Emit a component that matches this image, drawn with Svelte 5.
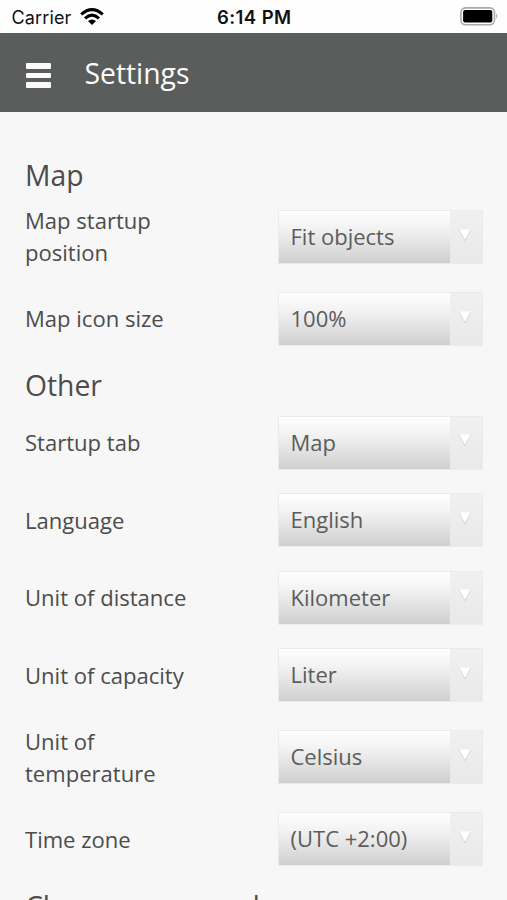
<script>
  const sections = [
    {
      title: 'Map',
      rows: [
        { label: 'Map startup position', value: 'Fit objects', tall: true },
        { label: 'Map icon size', value: '100%' }
      ]
    },
    {
      title: 'Other',
      rows: [
        { label: 'Startup tab', value: 'Map' },
        { label: 'Language', value: 'English' },
        { label: 'Unit of distance', value: 'Kilometer' },
        { label: 'Unit of capacity', value: 'Liter' },
        { label: 'Unit of temperature', value: 'Celsius', tall: true },
        { label: 'Time zone', value: '(UTC +2:00)' }
      ]
    },
    { title: 'Change password', rows: [] }
  ];
</script>

<div class="screen">
  <div class="status">
    <div class="carrier">
      <span>Carrier</span>
      <svg width="24" height="18" viewBox="0 0 24 18" fill="none" stroke="#000" stroke-width="3.1">
        <path d="M1.2 6.4 Q12 -3 22.8 6.4" />
        <path d="M5 10.3 Q12 4 19 10.3" />
        <path d="M8 13.1 Q12 9.7 16 13.1 L12 17 Z" fill="#000" stroke="none" />
      </svg>
    </div>
    <div class="clock">6:14 PM</div>
    <div class="power">
      <svg width="39" height="19" viewBox="0 0 39 19">
        <rect x="0.9" y="0.9" width="33.6" height="16.8" rx="4.6" fill="#fff" stroke="#aaa" stroke-width="1.6" />
        <rect x="3.1" y="3.1" width="29.2" height="12.4" rx="2" fill="#000" />
        <path d="M36.2 6.5 Q38.4 9.2 36.2 12 Z" fill="#aaa" />
      </svg>
    </div>
  </div>
  <header>
    <div class="menu"><i></i><i></i><i></i></div>
    <h1>Settings</h1>
  </header>
  <main>
    {#each sections as section}
      <h2>{section.title}</h2>
      {#each section.rows as row}
        <div class="row" class:tall={row.tall}>
          <div class="label">{row.label}</div>
          <div class="select">
            <div class="value">{row.value}</div>
            <div class="arrow">
              <svg width="14" height="15" viewBox="0 0 14 15">
                <path d="M1.5 2 L7 12.8 L12.5 2" fill="#fff" stroke="#d2d2d2" stroke-width="1" />
                <path d="M1.5 1.5 H12.5 L7 11.5 Z" fill="#fff" />
              </svg>
            </div>
          </div>
        </div>
      {/each}
    {/each}
  </main>
</div>

<style>
  .screen {
    width: 507px;
    height: 900px;
    overflow: hidden;
    background: #f7f7f7;
    color: #4c4c4c;
    font-family: 'Open Sans', 'Noto Sans', sans-serif;
  }
  .status {
    height: 33px;
    box-sizing: border-box;
    padding: 1px 8px 0 11.5px;
    display: grid;
    grid-template-columns: 1fr auto 1fr;
    align-items: center;
    background: #fefefe;
    color: #111;
    font-family: Inter, 'Liberation Sans', sans-serif;
    font-size: 18px;
  }
  .carrier {
    display: flex;
    align-items: center;
    gap: 8px;
    letter-spacing: 0.15px;
  }
  .clock {
    margin-left: -2px;
    font-size: 18.5px;
    font-weight: 600;
    letter-spacing: 0.45px;
  }
  .power {
    display: flex;
    justify-content: flex-end;
    margin-top: -1px;
  }
  header {
    height: 79px;
    box-sizing: border-box;
    padding: 0 26px 0 26px;
    display: flex;
    align-items: center;
    background: #5b5d5c;
    color: #fbfbfb;
  }
  .menu {
    display: flex;
    flex-direction: column;
    gap: 4px;
    width: 25px;
    padding-top: 6px;
  }
  .menu i {
    height: 5.6px;
    background: #fbfbfb;
    border-radius: 1px;
  }
  h1 {
    margin: 1px 0 0 33.5px;
    font-size: 28.3px;
    font-weight: 400;
    line-height: 40px;
  }
  main {
    padding: 35.5px 24px 0 25px;
  }
  h2 {
    margin: 0;
    height: 46.25px;
    box-sizing: border-box;
    padding-top: 7px;
    font-size: 28.3px;
    line-height: 40px;
    font-weight: 400;
  }
  h2:last-child {
    padding-top: 8px;
  }
  .row {
    height: 77.5px;
    display: flex;
    align-items: center;
    justify-content: space-between;
  }
  .row.tall {
    height: 86.5px;
  }
  .label {
    width: 175px;
    padding-bottom: 1.5px;
    font-size: 22.05px;
    line-height: 32px;
  }
  .select {
    width: 205px;
    height: 54px;
    box-sizing: border-box;
    border: 1.5px solid #ebebeb;
    display: flex;
    background: linear-gradient(#f0f0f0, #e9e9e9);
  }
  .value {
    width: 171px;
    box-sizing: border-box;
    padding-left: 11.5px;
    background: linear-gradient(#fff, #f2f2f2 35%, #cfcfcf);
    font-size: 22px;
    line-height: 51.5px;
    color: #5c5c5c;
    white-space: nowrap;
  }
  .arrow {
    flex: 1;
    padding: 16.5px 0 0 8px;
  }
  .arrow svg {
    display: block;
  }
</style>
